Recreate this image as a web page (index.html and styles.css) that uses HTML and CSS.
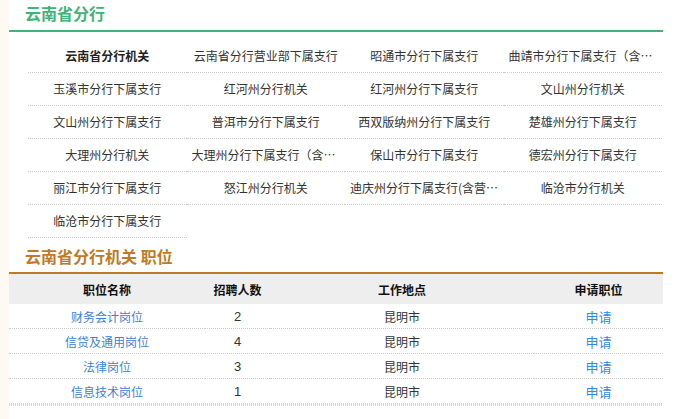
FILE: index.html
```html
<!DOCTYPE html>
<html lang="zh-CN">
<head>
<meta charset="utf-8">
<title>云南省分行</title>
<link rel="stylesheet" href="styles.css">
</head>
<body>
<div class="page">
  <div class="inner">
    <section class="branch">
      <h2 class="title title-green">云南省分行</h2>
      <ul class="org-grid">
        <li class="org active">云南省分行机关</li>
        <li class="org">云南省分行营业部下属支行</li>
        <li class="org">昭通市分行下属支行</li>
        <li class="org" title="曲靖市分行下属支行（含营业部）">曲靖市分行下属支行（含营业部）</li>
        <li class="org">玉溪市分行下属支行</li>
        <li class="org">红河州分行机关</li>
        <li class="org">红河州分行下属支行</li>
        <li class="org">文山州分行机关</li>
        <li class="org">文山州分行下属支行</li>
        <li class="org">普洱市分行下属支行</li>
        <li class="org">西双版纳州分行下属支行</li>
        <li class="org">楚雄州分行下属支行</li>
        <li class="org">大理州分行机关</li>
        <li class="org" title="大理州分行下属支行（含营业部）">大理州分行下属支行（含营业部）</li>
        <li class="org">保山市分行下属支行</li>
        <li class="org">德宏州分行下属支行</li>
        <li class="org">丽江市分行下属支行</li>
        <li class="org">怒江州分行机关</li>
        <li class="org" title="迪庆州分行下属支行(含营业部)">迪庆州分行下属支行(含营业部)</li>
        <li class="org">临沧市分行机关</li>
        <li class="org">临沧市分行下属支行</li>
      </ul>
    </section>
    <section class="jobs">
      <h2 class="title title-orange">云南省分行机关 职位</h2>
      <table class="job-table">
        <colgroup>
          <col class="c1"><col class="c2"><col class="c3"><col class="c4">
        </colgroup>
        <thead>
          <tr><th>职位名称</th><th>招聘人数</th><th>工作地点</th><th>申请职位</th></tr>
        </thead>
        <tbody>
          <tr><td><a class="link" href="#">财务会计岗位</a></td><td class="num">2</td><td>昆明市</td><td><a class="apply" href="#">申请</a></td></tr>
          <tr><td><a class="link" href="#">信贷及通用岗位</a></td><td class="num">4</td><td>昆明市</td><td><a class="apply" href="#">申请</a></td></tr>
          <tr><td><a class="link" href="#">法律岗位</a></td><td class="num">3</td><td>昆明市</td><td><a class="apply" href="#">申请</a></td></tr>
          <tr class="last"><td><a class="link" href="#">信息技术岗位</a></td><td class="num">1</td><td>昆明市</td><td><a class="apply" href="#">申请</a></td></tr>
        </tbody>
      </table>
      <div class="table-foot"></div>
    </section>
  </div>
</div>
</body>
</html>
```

FILE: styles.css
```css
html, body {
  margin: 0;
  padding: 0;
}
body {
  background: #fefaf3;
  font-family: "Microsoft YaHei", "Noto Sans CJK SC", sans-serif;
  font-size: 12px;
  color: #333;
}
.page {
  margin-left: 9px;
  background: #fff;
  min-height: 419px;
}
.inner {
  width: 654px;
}
.title {
  margin: 0;
  padding: 0 0 4px 16px;
  font-size: 16px;
  line-height: 26px;
  font-weight: bold;
}
.title-green {
  color: #3fb478;
  border-bottom: 2px solid #3fb478;
}
.title-orange {
  color: #c07a26;
  border-bottom: 2px solid #c07a26;
  padding-bottom: 3px;
}
.org-grid {
  list-style: none;
  margin: 8px 0 0 19px;
  padding: 0;
  width: 634px;
  display: grid;
  grid-template-columns: repeat(4, 1fr);
}
.org {
  line-height: 32px;
  height: 32px;
  padding: 0 5px;
  text-align: center;
  white-space: nowrap;
  overflow: hidden;
  text-overflow: ellipsis;
  border-bottom: 1px dotted #ccc;
  color: #333;
}
.org.active {
  font-weight: bold;
  color: #222;
}
.jobs {
  margin-top: 5px;
}
.job-table {
  width: 654px;
  border-collapse: collapse;
  table-layout: fixed;
}
.c1 { width: 196px; }
.c2 { width: 65px; }
.c3 { width: 264px; }
.c4 { width: 129px; }
.job-table th {
  background: #eeeeee;
  height: 30px;
  padding: 0;
  font-weight: bold;
  color: #111;
  font-size: 12px;
}
.job-table td {
  height: 24px;
  padding: 0;
  text-align: center;
  border-bottom: 1px dotted #ccc;
  color: #333;
}
.job-table tr.last td {
  border-bottom: none;
}
.job-table td.num {
  font-family: "Liberation Sans", Arial, sans-serif;
  font-size: 13px;
}
.table-foot {
  height: 3px;
  background: repeating-linear-gradient(90deg, #d4d4d4 0 1px, transparent 1px 2px);
}
.link {
  color: #3b82d8;
  text-decoration: none;
}
.apply {
  color: #2f8be6;
  text-decoration: none;
  font-size: 13px;
}
```
